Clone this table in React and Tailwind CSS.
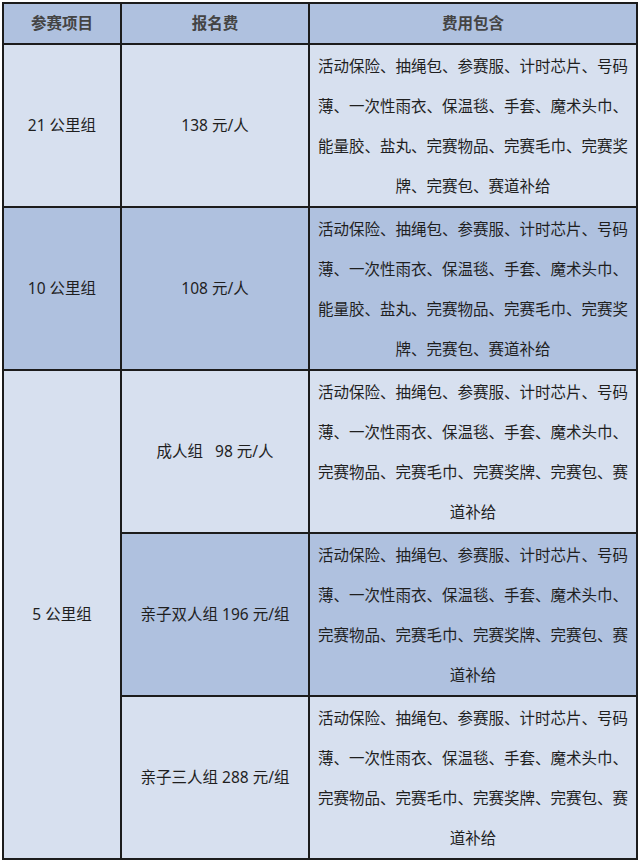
const ITEMS_A = [
  "活动保险、抽绳包、参赛服、计时芯片、号码",
  "薄、一次性雨衣、保温毯、手套、魔术头巾、",
  "能量胶、盐丸、完赛物品、完赛毛巾、完赛奖",
  "牌、完赛包、赛道补给",
];

const ITEMS_B = [
  "活动保险、抽绳包、参赛服、计时芯片、号码",
  "薄、一次性雨衣、保温毯、手套、魔术头巾、",
  "完赛物品、完赛毛巾、完赛奖牌、完赛包、赛",
  "道补给",
];

const light = "bg-[#d7e0ef]";
const dark = "bg-[#afc1df]";

function Cell({ tone, className = "", children }) {
  return (
    <div className={`${tone} flex items-center justify-center text-center ${className}`}>
      {children}
    </div>
  );
}

function Items({ lines, tone }) {
  return (
    <Cell tone={tone} className="flex-col leading-[40px]">
      {lines.map((l, i) => (
        <div key={i} className="whitespace-nowrap">{l}</div>
      ))}
    </Cell>
  );
}

export default function App() {
  return (
    <div className="w-[640px] h-[864px] bg-white pt-[2px] pl-[2px]">
      <div
        className="grid w-[636px] grid-cols-[116px_186px_326px] grid-rows-[39px_161px_161px_161px_161px_161px] gap-[2px] p-[2px] bg-[#1c1c1c] text-[15.5px] text-[#1f1f1f]"
        style={{ fontFamily: '"Noto Sans", "Noto Sans CJK SC", sans-serif' }}
      >
        <Cell tone={dark} className="font-bold text-[#444]">参赛项目</Cell>
        <Cell tone={dark} className="font-bold text-[#444]">报名费</Cell>
        <Cell tone={dark} className="font-bold text-[#444]">费用包含</Cell>

        <Cell tone={light}>21 公里组</Cell>
        <Cell tone={light}>138 元/人</Cell>
        <Items lines={ITEMS_A} tone={light} />

        <Cell tone={dark}>10 公里组</Cell>
        <Cell tone={dark}>108 元/人</Cell>
        <Items lines={ITEMS_A} tone={dark} />

        <Cell tone={light} className="row-span-3">5 公里组</Cell>
        <Cell tone={light} className="whitespace-pre">成人组   98 元/人</Cell>
        <Items lines={ITEMS_B} tone={light} />

        <Cell tone={dark}>亲子双人组 196 元/组</Cell>
        <Items lines={ITEMS_B} tone={dark} />

        <Cell tone={light}>亲子三人组 288 元/组</Cell>
        <Items lines={ITEMS_B} tone={light} />
      </div>
    </div>
  );
}
